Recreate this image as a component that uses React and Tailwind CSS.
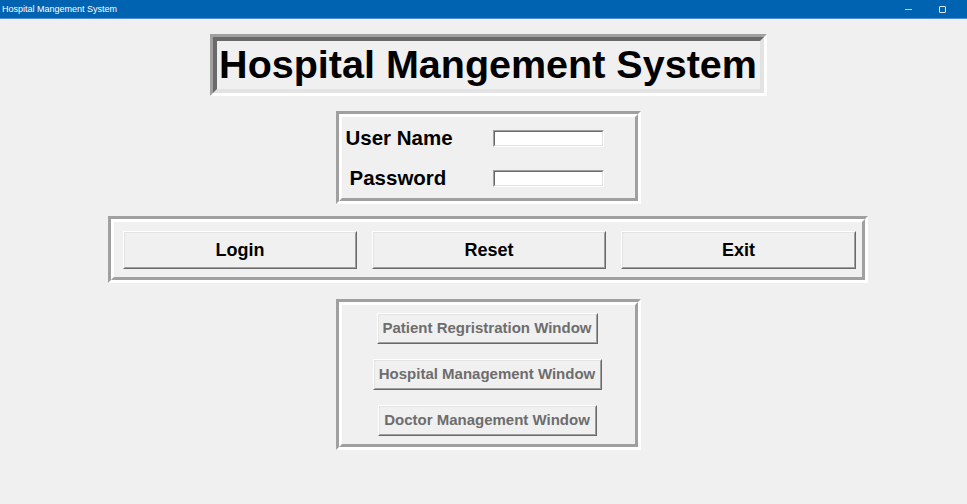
import React from 'react';

const font = "font-['Liberation_Sans',Arial,sans-serif]";

// tk style "ridge" frame, bd 6
function Ridge({ className, children }) {
    return (
        <div className={`box-border border-[3px] border-t-[#a0a0a0] border-l-[#a0a0a0] border-b-white border-r-white ${className}`}>
            <div className="w-full h-full border-[3px] border-t-white border-l-white border-b-[#a0a0a0] border-r-[#a0a0a0]">
                {children}
            </div>
        </div>
    );
}

function Sunken({ className, inner = '', children }) {
    return (
        <div className={`border-[3px] border-t-[#a0a0a0] border-l-[#a0a0a0] border-b-white border-r-white ${className}`}>
            <div className={`w-full h-full border-[4px] border-t-[#696969] border-l-[#696969] border-b-[#e3e3e3] border-r-[#e3e3e3] ${inner}`}>
                {children}
            </div>
        </div>
    );
}

function TkButton({ className, textClass = 'text-black', children }) {
    return (
        <button className={`border border-t-white border-l-white border-b-[#696969] border-r-[#696969] bg-[#f0f0f0] p-0 ${className}`}>
            <div className={`w-full h-full border border-t-[#e3e3e3] border-l-[#e3e3e3] border-b-[#a0a0a0] border-r-[#a0a0a0] flex items-center justify-center font-bold whitespace-nowrap ${textClass}`}>
                {children}
            </div>
        </button>
    );
}

function Entry() {
    return (
        <div className="w-[111px] h-[17px] border border-t-[#a0a0a0] border-l-[#a0a0a0] border-b-white border-r-white">
            <div className="w-full h-full border border-t-[#696969] border-l-[#696969] border-b-[#e3e3e3] border-r-[#e3e3e3] bg-white" />
        </div>
    );
}

export default function App() {
    return (
        <div className={`w-[967px] h-[504px] bg-[#f0f0f0] flex flex-col overflow-hidden ${font}`}>
            {/* window title bar */}
            <div className="h-[19px] bg-[#0063b1] border-b border-[#4f8fcf] flex items-center justify-between shrink-0">
                <span className="text-white text-[9px] leading-none pl-[2px]">Hospital Mangement System</span>
                <div className="flex items-center h-full">
                    <span className="w-[7px] h-px bg-[#b8d3ee] mr-[27px]" />
                    <span className="w-[7px] h-[7px] border border-[#dfeaf6] rounded-[1px] mr-[21px]" />
                </div>
            </div>

            <div className="flex flex-col items-center pl-[9px] pt-[15px]">
                <Sunken className="w-[557px] h-[62px] shrink-0" inner="flex items-center justify-center">
                    <span className="text-[39.5px] font-bold text-black leading-none whitespace-nowrap">Hospital Mangement System</span>
                </Sunken>

                <Ridge className="w-[305px] h-[93px] mt-[15px] shrink-0">
                    <div className="flex flex-col pt-[11px]">
                        <div className="flex items-center h-[20px]">
                            <span className="w-[151px] pl-[4px] text-[20.5px] font-bold text-black leading-none whitespace-nowrap">User Name</span>
                            <Entry />
                        </div>
                        <div className="flex items-center h-[20px] mt-[20px]">
                            <span className="w-[151px] pl-[8px] text-[20.5px] font-bold text-black leading-none whitespace-nowrap">Password</span>
                            <Entry />
                        </div>
                    </div>
                </Ridge>

                <Ridge className="w-[760px] h-[67px] mt-[12px] shrink-0">
                    <div className="flex pt-[9px] pl-[9px] gap-[15px]">
                        <TkButton className="w-[234px] h-[38px]" textClass="text-black text-[18px]">Login</TkButton>
                        <TkButton className="w-[234px] h-[38px]" textClass="text-black text-[18px]">Reset</TkButton>
                        <TkButton className="w-[235px] h-[38px]" textClass="text-black text-[18px]">Exit</TkButton>
                    </div>
                </Ridge>

                <Ridge className="w-[305px] h-[151px] mt-[16px] shrink-0">
                    <div className="flex flex-col items-center pt-[8px] gap-[15px]">
                        <TkButton className="w-[221px] h-[31px] ml-[-2px]" textClass="text-[#6d6d6d] text-[15px]">Patient Regristration Window</TkButton>
                        <TkButton className="w-[229px] h-[31px] ml-[-2px]" textClass="text-[#6d6d6d] text-[15px]">Hospital Management Window</TkButton>
                        <TkButton className="w-[219px] h-[31px] ml-[-2px]" textClass="text-[#6d6d6d] text-[15px]">Doctor Management Window</TkButton>
                    </div>
                </Ridge>
            </div>
        </div>
    );
}
